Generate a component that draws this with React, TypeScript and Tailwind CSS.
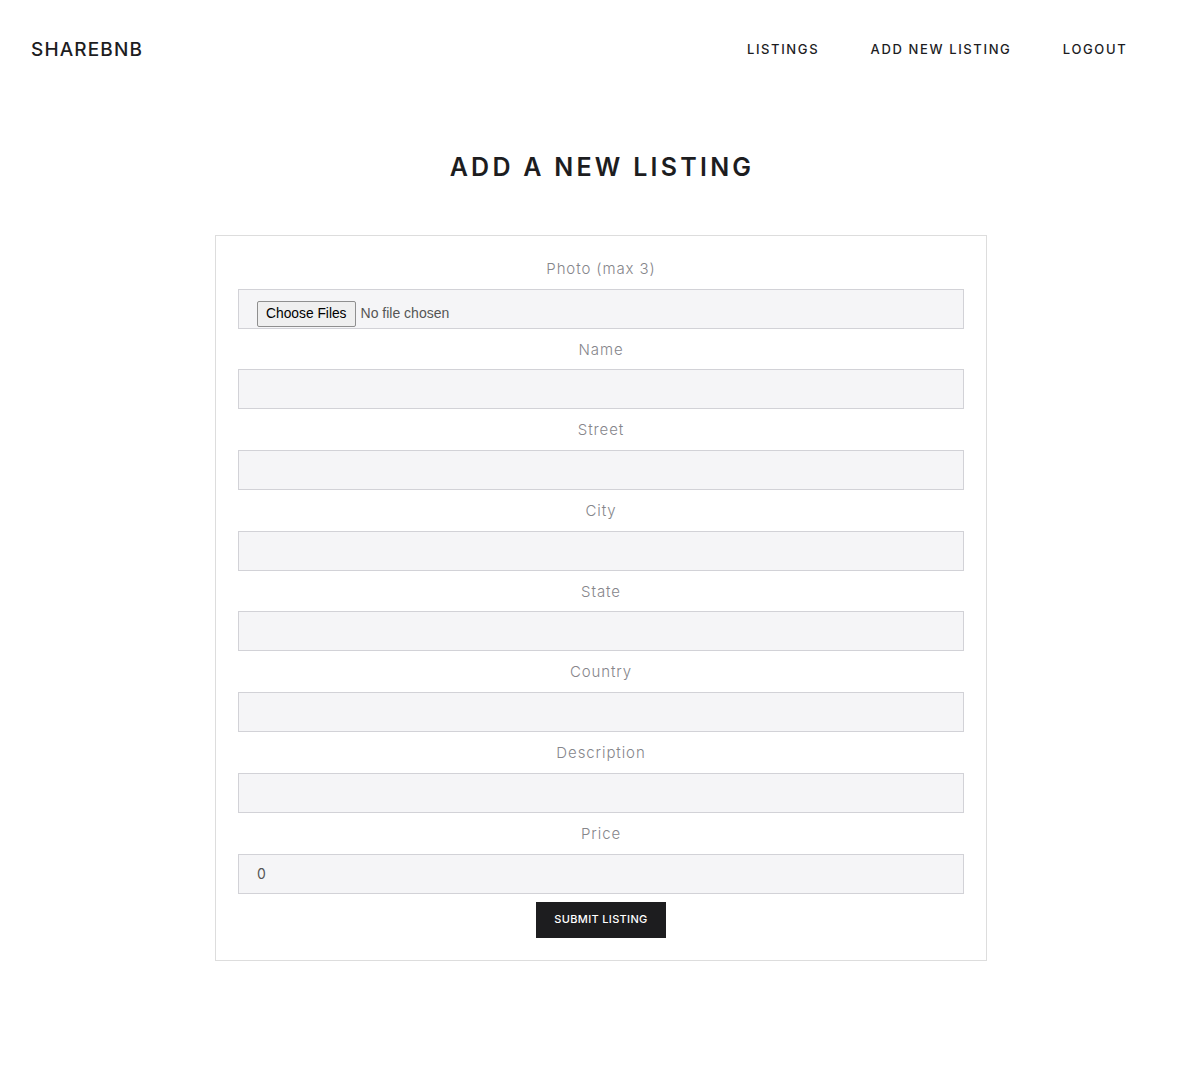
const fields = ["Name", "Street", "City", "State", "Country", "Description"];

function Label({ children }: { children: React.ReactNode }) {
  return (
    <label className="mb-[9px] mt-[11px] block h-[20.7px] text-center text-[15px] font-light leading-[20.7px] tracking-[0.06em] text-[#86868b]">
      {children}
    </label>
  );
}

export default function App() {
  return (
    <div className="min-h-screen bg-white font-['Inter',sans-serif] text-[#1d1d1f]">
      <nav className="flex h-[98px] items-center justify-between pl-[31px] pr-[51px] pt-[2px]">
        <a className="text-[19px] font-medium tracking-[0.06em] text-[#1d1d1f]">SHAREBNB</a>
        <div className="flex items-center">
          {["LISTINGS", "ADD NEW LISTING", "LOGOUT"].map((item) => (
            <a key={item} className="px-[25.7px] text-[13px] font-medium tracking-[0.125em] text-[#1d1d1f]">
              {item}
            </a>
          ))}
        </div>
      </nav>

      <h1 className="mt-[51px] text-center text-[25px] font-semibold leading-[36px] tracking-[0.13em]">
        ADD A NEW LISTING
      </h1>

      <div className="mt-[50px] flex justify-center pr-[2px]">
        <form className="w-[772px] border border-[#ddd] px-[22px] pb-[22px] pt-[12px]">
          <Label>Photo (max 3)</Label>
          <div className="h-[40px] border border-[#d2d2d7] bg-[#f5f5f7] pl-[18px] pt-[10px]">
            <input
              type="file"
              multiple
              className="font-['Liberation_Sans',sans-serif] text-[14px] text-[#555] file:mr-[5px] file:h-[26px] file:rounded-[2px] file:border file:border-solid file:border-[#8f8f8f] file:bg-[#efefef] file:px-[8px] file:font-['Liberation_Sans',sans-serif] file:text-[13.8px] file:text-black"
            />
          </div>
          {fields.map((f) => (
            <div key={f}>
              <Label>{f}</Label>
              <input className="block h-[40px] w-full border border-[#d2d2d7] bg-[#f5f5f7] px-[18px] text-[14px] outline-none" />
            </div>
          ))}
          <Label>Price</Label>
          <input
            defaultValue="0"
            className="block h-[40px] w-full border border-[#d2d2d7] bg-[#f5f5f7] px-[18px] text-[14px] text-[#555] outline-none"
          />
          <div className="mt-[8px] flex justify-center">
            <button type="button" className="h-[36px] w-[130px] bg-[#1d1d1f] text-[11px] font-medium tracking-[0.03em] text-white">
              SUBMIT LISTING
            </button>
          </div>
        </form>
      </div>
    </div>
  );
}
